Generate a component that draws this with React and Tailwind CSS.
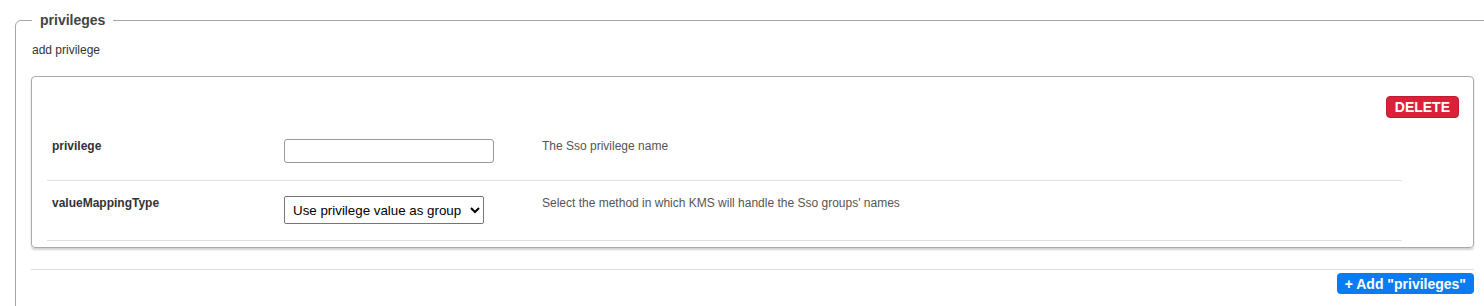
import { useState } from 'react'

const rows = [
  { name: 'privilege', kind: 'text', help: 'The Sso privilege name' },
  { name: 'valueMappingType', kind: 'select', help: "Select the method in which KMS will handle the Sso groups' names" },
]

export default function App() {
  const [values, setValues] = useState({ privilege: '', valueMappingType: 'group' })

  return (
    <div className="w-full h-[306px] overflow-hidden bg-white font-['Liberation_Sans',Arial,sans-serif]">
      <fieldset className="ml-[15px] mt-[12px] w-[1475px] border border-[#a6a6a6] rounded-tl-[6px] px-[15px] pt-[14px] pb-6">
        <legend className="ml-px px-2 text-[14px] leading-[17px] font-bold text-[#444]">privileges</legend>
        <p className="pl-px text-[12px] leading-[14px] text-[#333]">add privilege</p>

        <div className="mt-[19px] border border-[#aaa] rounded-[4px] shadow-[0_2px_2px_rgba(0,0,0,0.18)] px-[14px] pt-[19px] pb-[6px]">
          <div className="flex justify-end">
            <button className="h-[22px] px-[8px] rounded-[4px] bg-[#dc2039] border border-[#c21a30] text-white text-[14px] font-bold leading-none">
              DELETE
            </button>
          </div>
          <div className="w-[1355px] ml-px">
            {rows.map((r, i) => (
              <div
                key={r.name}
                className={`flex items-start border-b border-[#e0e0e0] ${i === 0 ? 'pt-[21px] pb-[17px]' : 'pt-[15px] pb-[16px]'}`}
              >
                <div className="w-[237px] pl-[5px] text-[12px] leading-[14px] font-bold text-[#333]">
                  {r.name}
                </div>
                <div className="w-[258px]">
                  {r.kind === 'text' ? (
                    <input
                      type="text"
                      value={values.privilege}
                      onChange={(e) => setValues({ ...values, privilege: e.target.value })}
                      className="block w-[210px] h-[24px] border border-[#9a9a9a] rounded-[3px] px-2 text-[13px] outline-none"
                    />
                  ) : (
                    <select
                      value={values.valueMappingType}
                      onChange={(e) => setValues({ ...values, valueMappingType: e.target.value })}
                      className="block w-[200px] h-[28px] pl-[4px] border border-[#767676] rounded-[2px] text-[13.33px] text-black font-['Liberation_Sans',Arial,sans-serif] bg-white appearance-auto"
                    >
                      <option value="group">Use privilege value as group</option>
                    </select>
                  )}
                </div>
                <div className="flex-1 text-[12px] leading-[14px] text-[#555]">{r.help}</div>
              </div>
            ))}
          </div>
        </div>

        <div className="mt-[21px] border-t border-[#dedede] pt-[3px] flex justify-end">
          <button className="h-[21px] px-[8px] rounded-[4px] bg-[#0b7bf2] text-white text-[14px] font-bold leading-none">
            + Add "privileges"
          </button>
        </div>
      </fieldset>
    </div>
  )
}
